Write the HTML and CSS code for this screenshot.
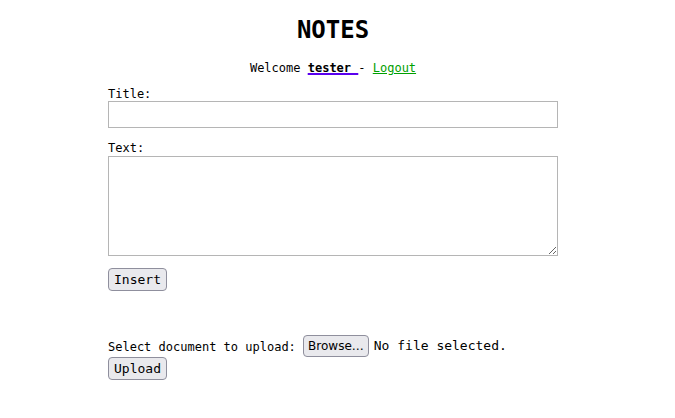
FILE: index.html
```html
<!DOCTYPE html>
<html>
<head>
<meta charset="utf-8">
<link rel="stylesheet" href="styles.css">
</head>
<body>
<div class="page">
  <h1 class="title">NOTES</h1>
  <p class="welcome">Welcome <a href="#" class="user"><b>tester </b></a>- <a href="#" class="logout">Logout</a></p>
  <form class="form">
    <label class="label" for="t">Title:</label>
    <input class="input" id="t" type="text">
    <label class="label label-text" for="x">Text:</label>
    <textarea class="area" id="x"></textarea>
    <div class="actions"><button type="button" class="btn">Insert</button></div>
  </form>
  <form class="upload">
    <div class="file-row"><span class="file-label">Select document to upload: </span><span class="browse">Browse…</span><span class="nofile">No file selected.</span></div>
    <button type="button" class="btn">Upload</button>
  </form>
</div>
</body>
</html>
```

FILE: styles.css
```css
html, body { background: #fff; }
body {
  margin: 8px;
  font-family: "DejaVu Sans Mono", monospace;
  font-size: 12px;
  color: #000;
}
.page { width: 650px; }
.title {
  margin: 7px 0 0;
  height: 30px;
  line-height: 30px;
  text-align: center;
  font-size: 24px;
  font-weight: bold;
}
.welcome {
  margin: 16px 0 0;
  text-align: center;
  line-height: 14px;
}
.user { text-decoration-thickness: 2px; color: #000; text-decoration-color: #5a00ee; }
.logout { color: #00a000; }
.form {
  margin: 12px 0 0 100px;
  width: 450px;
  display: flex;
  flex-direction: column;
  align-items: flex-start;
}
.label { line-height: 14px; }
.input {
  box-sizing: border-box;
  width: 450px;
  height: 27px;
  margin: 0;
  border: 1px solid #b5b5b5;
  font: inherit;
}
.label-text { margin-top: 13px; }
.area {
  box-sizing: border-box;
  width: 450px;
  height: 100px;
  margin: 1px 0 0;
  border: 1px solid #b5b5b5;
  font: inherit;
  resize: both;
}
.actions { margin-top: 12px; }
.btn {
  font-family: "DejaVu Sans Mono", monospace;
  font-size: 13px;
  height: 23px;
  padding: 0 5px;
  margin: 0;
  background: #e9e9ed;
  border: 1px solid #8f8f9d;
  border-radius: 4px;
  color: #000;
}
.upload { margin: 44px 0 0 100px; }
.file-row {
  height: 22px;
  line-height: 22px;
  white-space: pre;
}
.file-label { display: inline-block; vertical-align: top; padding-top: 1px; }
.browse {
  display: inline-block;
  vertical-align: top;
  font-family: "DejaVu Sans", sans-serif;
  font-size: 12px;
  height: 20px;
  line-height: 20px;
  padding: 0 4px;
  background: #e9e9ed;
  border: 1px solid #8f8f9d;
  border-radius: 4px;
}
.nofile { display: inline-block; vertical-align: top; font-size: 13px; margin-left: 5px; }
```
